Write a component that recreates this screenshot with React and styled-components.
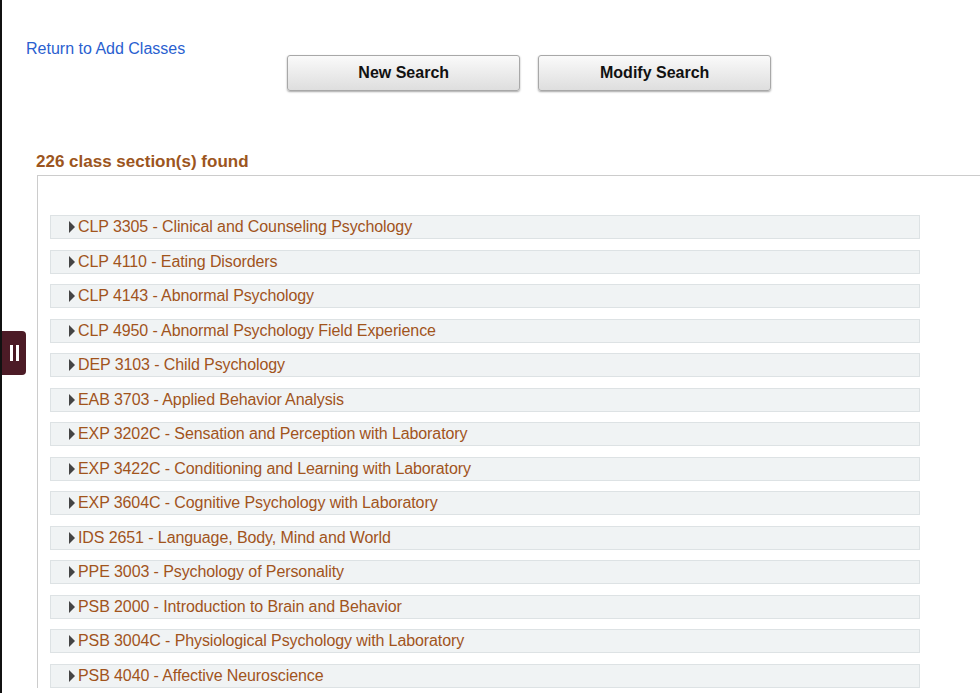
import React from 'react';
import styled, { createGlobalStyle } from 'styled-components';

const Global = createGlobalStyle`
body{margin:0;font-family:"Liberation Sans",Arial,sans-serif;background:#fff;}
`;

const Page = styled.div`
position:relative;
height:693px;
overflow:hidden;
border-left:2px solid #111;
box-sizing:border-box;
`;

const Top = styled.div`
display:flex;
padding:40px 0 0 24px;
height:152px;
box-sizing:border-box;
`;

const BackLink = styled.a`
color:#2a5fd0;
font-size:16px;
text-decoration:none;
margin-right:102px;
height:20px;
`;

const Buttons = styled.div`
display:flex;
gap:18px;
margin-top:15px;
`;

const Button = styled.button`
width:233px;
height:36px;
border:1px solid #a8a8a8;
border-radius:3px;
background:linear-gradient(#fafafa,#dedede);
box-shadow:0 1px 2px rgba(0,0,0,.35);
font-family:"Liberation Sans",Arial,sans-serif;
font-weight:bold;
font-size:16px;
color:#111;
`;

const Heading = styled.h2`
margin:0 0 3px 34px;
font-size:17px;
font-weight:bold;
color:#9c5520;
`;

const Box = styled.div`
margin-left:35px;
border-top:1px solid #ccc;
border-left:1px solid #ccc;
padding:39px 0 0 12px;
display:flex;
flex-direction:column;
gap:10.5px;
`;

const Row = styled.div`
width:870px;
height:24px;
box-sizing:border-box;
background:#f0f3f4;
border:1px solid #dde2e4;
display:flex;
align-items:center;
padding-left:18px;
font-size:16px;
letter-spacing:-0.1px;
color:#a1541c;
`;

const Arrow = styled.span`
width:0;height:0;
border-top:6px solid transparent;
border-bottom:6px solid transparent;
border-left:6px solid #444;
margin-right:3px;
`;

const Tab = styled.div`
position:absolute;
left:0;
top:331px;
width:24px;
height:44px;
background:#4c1b26;
border-radius:0 4px 4px 0;
display:flex;
align-items:center;
justify-content:center;
gap:3px;
`;

const Bar = styled.span`
width:3px;height:16px;background:#fff;
`;

const courses = [
  'CLP 3305 - Clinical and Counseling Psychology',
  'CLP 4110 - Eating Disorders',
  'CLP 4143 - Abnormal Psychology',
  'CLP 4950 - Abnormal Psychology Field Experience',
  'DEP 3103 - Child Psychology',
  'EAB 3703 - Applied Behavior Analysis',
  'EXP 3202C - Sensation and Perception with Laboratory',
  'EXP 3422C - Conditioning and Learning with Laboratory',
  'EXP 3604C - Cognitive Psychology with Laboratory',
  'IDS 2651 - Language, Body, Mind and World',
  'PPE 3003 - Psychology of Personality',
  'PSB 2000 - Introduction to Brain and Behavior',
  'PSB 3004C - Physiological Psychology with Laboratory',
  'PSB 4040 - Affective Neuroscience',
];

export default function App() {
  return (
    <Page>
      <Global />
      <Top>
        <BackLink href="#">Return to Add Classes</BackLink>
        <Buttons>
          <Button>New Search</Button>
          <Button>Modify Search</Button>
        </Buttons>
      </Top>
      <Heading>226 class section(s) found</Heading>
      <Box>
        {courses.map((c) => (
          <Row key={c}><Arrow />{c}</Row>
        ))}
      </Box>
      <Tab><Bar /><Bar /></Tab>
    </Page>
  );
}
